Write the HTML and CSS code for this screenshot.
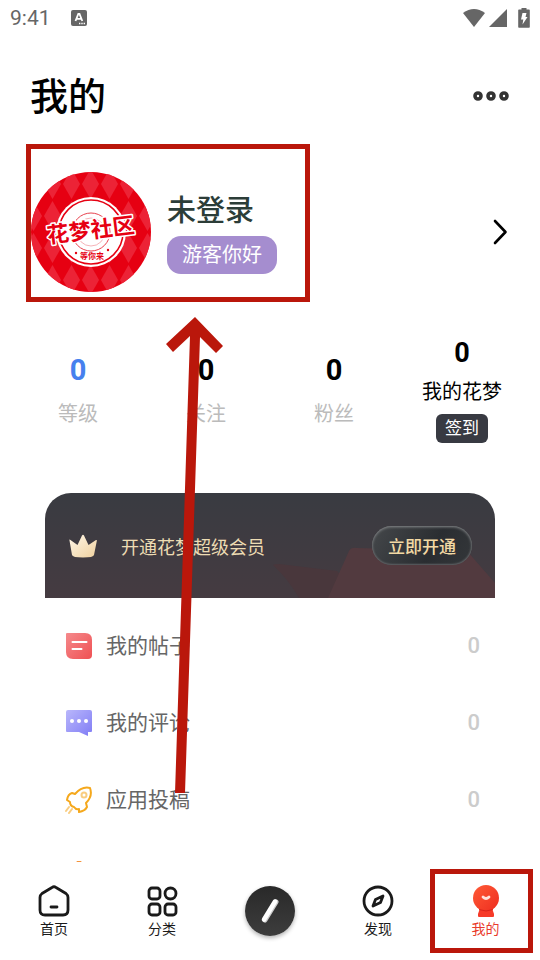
FILE: index.html
```
<!DOCTYPE html>
<html lang="zh-CN">
<head>
    <meta charset="UTF-8">
    <meta name="viewport" content="width=device-width, initial-scale=1.0">
    <title>我的</title>
    <link rel="stylesheet" href="styles.css">
</head>
<body>
    <div class="status-bar">
        <span>9:41</span>
        <svg class="status-app" width="16" height="16" viewBox="0 0 16 16">
            <rect width="16" height="16" rx="2" fill="#666"/>
            <path d="M4.5 11 7.3 4h1.2l2.8 7M5.8 8.8h4.2" fill="none" stroke="#fff" stroke-width="1.8"/>
            <path d="M8 13.5h1.4M10.3 13.5h1.4M12.6 13.5h1.4" stroke="#fff" stroke-width="1.4"/>
        </svg>
        <div class="status-icons">
            <svg width="24" height="20" viewBox="0 0 24 20"><path d="M1 5Q12-3 23 5L12 19Z" fill="#666"/></svg>
            <svg width="20" height="20" viewBox="0 0 20 20"><path d="M19 1v18H1Z" fill="#666"/></svg>
            <svg class="battery" width="12" height="20" viewBox="0 0 12 20">
                <path d="M3.5 0h5v1.5H11a.8.8 0 0 1 .8.8V19a.8.8 0 0 1-.8.8H1a.8.8 0 0 1-.8-.8V2.300a.8.8 0 0 1 .8-.8h2.500Z" fill="#666"/>
                <path d="M4.500 5h4L7.500 9h2L4.500 16.500l.8-5H3Z" fill="#fff"/>
            </svg>
        </div>
    </div>

    <main class="content">
        <header class="header">
            <h1>我的</h1>
            <button class="more" type="button" aria-label="更多">
                <svg width="38" height="12" viewBox="0 0 38 12" fill="none" stroke="#333" stroke-width="3.600">
                    <circle cx="6" cy="6" r="3"/><circle cx="19" cy="6" r="3"/><circle cx="32" cy="6" r="3"/>
                </svg>
            </button>
        </header>

        <section class="profile">
            <div class="profile-box">
                <svg class="avatar" width="120" height="120" viewBox="0 0 120 120">
                    <defs>
                        <pattern id="diamonds" width="19" height="32" patternUnits="userSpaceOnUse" x="12" y="-4">
                            <path d="M9.500 1 18 16 9.500 31 1 16Z" fill="#ec2336"/>
                        </pattern>
                    </defs>
                    <circle cx="60" cy="60" r="60" fill="#e60012"/>
                    <circle cx="60" cy="60" r="60" fill="url(#diamonds)"/>
                    <circle cx="60" cy="60" r="35" fill="#fff"/>
                    <circle cx="60" cy="60" r="32" fill="none" stroke="#e60012" stroke-width="1.500"/>
                    <circle cx="60" cy="60" r="19" fill="none" stroke="#e8434f"/>
                    <circle cx="60" cy="60" r="14" fill="none" stroke="#ee8088" stroke-width=".6"/>
                    <text class="avatar-name" x="60" y="66" text-anchor="middle" transform="rotate(-7 60 60)">花梦社区</text>
                    <text class="avatar-sub" x="61" y="87" text-anchor="middle">等你来</text>
                    <circle cx="45" cy="81" r="1.200" fill="#e60012"/>
                    <circle cx="77" cy="78" r="1.200" fill="#e60012"/>
                </svg>
                <div class="profile-text">
                    <h2>未登录</h2>
                    <span class="greeting">游客你好</span>
                </div>
            </div>
            <a class="profile-link" href="#" aria-label="登录">
                <svg width="16" height="26" viewBox="0 0 16 26" fill="none" stroke="#000" stroke-width="2.600" stroke-linecap="round" stroke-linejoin="round"><path d="M3 2 13.500 13 3 24"/></svg>
            </a>
        </section>

        <section class="stats">
            <div class="stat level"><b>0</b><span>等级</span></div>
            <div class="stat"><b>0</b><span>关注</span></div>
            <div class="stat"><b>0</b><span>粉丝</span></div>
            <div class="stat coins"><b>0</b><span>我的花梦</span><button type="button">签到</button></div>
        </section>

        <section class="vip">
            <svg class="vip-bg" width="224" height="52" viewBox="0 0 224 52">
                <path d="M3 20Q0 18 8 18L66 25 90 52H28Q18 34 3 20Z" fill="#49373c"/>
                <path d="M57 52 78 5Q80 1 86 2L196 5 224 37V52Z" fill="#523a3f"/>
            </svg>
            <svg class="crown" width="30" height="24" viewBox="0 0 30 24">
                <defs><linearGradient id="gold" x2="1" y2="1"><stop stop-color="#fff7e8"/><stop offset="1" stop-color="#efd09e"/></linearGradient></defs>
                <path d="M1.500 6.500Q1 5 2.500 6L9.500 11 14 1.500Q15 0 16 1.500L20.500 11 28 6Q29.200 5.500 28.800 7L26 21Q25.500 23.500 15 23.500T4 21Z" fill="url(#gold)"/>
            </svg>
            <span class="vip-text">开通花梦超级会员</span>
            <button type="button">立即开通</button>
        </section>

        <nav class="menu">
            <a href="#">
                <svg width="28" height="28" viewBox="0 0 28 28">
                    <defs><linearGradient id="red" x2="1" y2="1"><stop stop-color="#f58a8c"/><stop offset="1" stop-color="#ef5053"/></linearGradient></defs>
                    <path d="M2 1h18q7 0 7 7v15q0 4-4 4H8q-7 0-7-7V2q0-1 1-1Z" fill="url(#red)"/>
                    <path d="M7.500 10h14M7.500 17h9" stroke="#fff" stroke-width="2" stroke-linecap="round"/>
                </svg>
                <span>我的帖子</span><b>0</b>
            </a>
            <a href="#">
                <svg width="28" height="28" viewBox="0 0 28 28">
                    <defs><linearGradient id="violet" x2="1" y2="1"><stop stop-color="#b9b7fb"/><stop offset="1" stop-color="#807cf5"/></linearGradient></defs>
                    <path d="M3 1h22q2 0 2 2v19q0 1-1 1h-3v4L14 23H2q-1 0-1-1V3q0-2 2-2Z" fill="url(#violet)"/>
                    <g fill="#fff"><circle cx="7" cy="12" r="2"/><circle cx="14" cy="12" r="2"/><circle cx="21" cy="12" r="2"/></g>
                </svg>
                <span>我的评论</span><b>0</b>
            </a>
            <a href="#">
                <svg width="28" height="28" viewBox="0 0 28 28" fill="none" stroke="#f5a81c" stroke-width="2" stroke-linejoin="round" stroke-linecap="round">
                    <path d="M10 8Q17 0 25 2 28 10 21 17L22 21Q20 25 14 26L14 23Q11 24 9 21 5 20 5 16L2 14Q3 8 7 7Z"/>
                    <circle cx="19" cy="9" r="2.500" stroke="#f9cd80"/>
                    <path d="M4 21 1 25M7 23 4 27" stroke="#f9cd80"/>
                </svg>
                <span>应用投稿</span><b>0</b>
            </a>
            <a href="#" aria-label="更多">
                <svg width="28" height="34" viewBox="0 0 28 34" fill="#f5943c"><path d="M12 1h4L26 16 14 32 2 16Z"/></svg>
            </a>
        </nav>

        <!-- 指向登录区域的箭头 -->
        <svg class="arrow" width="58" height="476" viewBox="166 317 58 476">
            <path d="M195 317 223 346 216 353 200 337 185 793H175L190 336 173 352 166 344Z" fill="#ba170b"/>
        </svg>
    </main>

    <nav class="tabs">
        <a href="#">
            <svg width="34" height="34" viewBox="0 0 34 34" fill="none" stroke="#1a1a1a" stroke-width="2.800" stroke-linecap="round" stroke-linejoin="round">
                <path d="M15 3.500Q17 2 19 3.500L29 9.500Q31 11 31 13.500V26Q31 31 26 31H8Q3 31 3 26V13.500Q3 11 5 9.500ZM14 23h6"/>
            </svg>
            <span>首页</span>
        </a>
        <a href="#">
            <svg width="34" height="34" viewBox="0 0 34 34" fill="none" stroke="#1a1a1a" stroke-width="2.800">
                <rect x="4" y="4" width="11" height="11" rx="3"/><circle cx="25.500" cy="9.500" r="5.500"/>
                <rect x="4" y="20" width="11" height="11" rx="3"/><rect x="20" y="20" width="11" height="11" rx="3"/>
            </svg>
            <span>分类</span>
        </a>
        <button class="compose" type="button" aria-label="发布">
            <svg width="50" height="50" viewBox="0 0 50 50" stroke-linecap="round">
                <path d="M20 34 31 16" stroke="#ccc" stroke-width="5"/>
                <path d="M19 33.500 30 15.500" stroke="#fff" stroke-width="4.500"/>
            </svg>
        </button>
        <a href="#">
            <svg width="34" height="34" viewBox="0 0 34 34" fill="none" stroke="#1a1a1a" stroke-width="2.800" stroke-linejoin="round">
                <circle cx="17" cy="17" r="14"/><path d="M22 12 19.500 18.500 12 22 14.500 15.500Z"/>
            </svg>
            <span>发现</span>
        </a>
        <a class="active" href="#">
            <svg width="34" height="34" viewBox="0 0 34 34">
                <defs><linearGradient id="face" x2="1" y2="1"><stop stop-color="#ff5a36"/><stop offset="1" stop-color="#ee2e20"/></linearGradient></defs>
                <path d="M11 24h12q1 3 2 6v2q0 1-1 1H10q-1 0-1-1v-2q1-3 2-6Z" fill="#f63a28"/>
                <circle cx="17" cy="14" r="13" fill="url(#face)"/>
                <path d="M10 25.500q7 3 14 0" fill="none" stroke="#d9241a"/>
                <path d="M14 13q3 3 6 0" fill="none" stroke="#ffe1dc" stroke-width="2.800" stroke-linecap="round"/>
            </svg>
            <span>我的</span>
        </a>
    </nav>
</body>
</html>
```
FILE: styles.css
```
* {
    margin: 0;
    padding: 0;
    box-sizing: border-box;
}

body {
    font-family: Roboto, "Noto Sans CJK SC", sans-serif;
    background-color: #fff;
    color: #000;
    height: 100vh;
    display: flex;
    flex-direction: column;
    overflow: hidden;
}

a {
    color: inherit;
    text-decoration: none;
}

button {
    font-family: inherit;
    border: none;
    background: none;
    cursor: pointer;
}

svg {
    display: block;
    flex-shrink: 0;
}

.status-bar {
    height: 36px;
    padding: 0 10px;
    display: flex;
    align-items: center;
    gap: 20px;
    font-size: 21px;
    color: #666;
}

.status-icons {
    margin-left: auto;
    display: flex;
    gap: 2px;
}

.battery {
    margin-left: 8px;
}

.content {
    flex: 1;
    min-height: 0;
    position: relative;
    overflow: hidden;
}

.header {
    height: 108px;
    padding: 14px 30px 0;
    display: flex;
    justify-content: space-between;
    align-items: flex-start;
}

h1 {
    font-size: 38px;
    font-weight: 500;
    line-height: 94px;
}

.more {
    height: 92px;
}

.profile {
    padding: 0 32px 0 26px;
    display: flex;
    align-items: center;
    justify-content: space-between;
}

.profile-box {
    width: 284px;
    height: 158px;
    border: 5px solid #ba170b;
    display: flex;
    align-items: center;
    gap: 16px;
    padding-top: 18px;
}

.avatar-name {
    font-size: 22px;
    font-weight: 700;
    fill: #e60012;
    stroke: #fff;
    stroke-width: 3px;
    stroke-linejoin: round;
    paint-order: stroke;
}

.avatar-sub {
    font-size: 8px;
    font-weight: 700;
    fill: #e60012;
}

.profile-text {
    display: flex;
    flex-direction: column;
    align-items: flex-start;
    gap: 4px;
}

h2 {
    font-size: 29px;
    font-weight: 500;
    line-height: 42px;
    color: #2c3d38;
}

.greeting {
    background-color: #a58dcf;
    color: #fff;
    font-size: 20px;
    line-height: 38px;
    padding: 0 15px;
    border-radius: 14px;
}

.profile-link {
    margin-top: 18px;
}

.stats {
    display: grid;
    grid-template-columns: repeat(4, 1fr);
    align-items: center;
    padding: 0 14px;
    margin-top: 34px;
}

.stat {
    display: flex;
    flex-direction: column;
    align-items: center;
    gap: 12px;
    padding-top: 2px;
}

.stat b {
    font-size: 29px;
    line-height: 34px;
    font-weight: 700;
}

.stat span {
    font-size: 20px;
    line-height: 30px;
    color: #bbb;
}

.level b {
    color: #4680ee;
}

.stat.coins {
    gap: 7px;
    padding-top: 0;
}

.coins b {
    font-size: 27px;
}

.stat.coins span {
    color: #000;
}

.coins button {
    background-color: #383a42;
    color: #fff;
    font-size: 17px;
    line-height: 29px;
    padding: 0 9px;
    border-radius: 6px;
}

.vip {
    position: relative;
    height: 105px;
    margin: 50px 45px 0;
    padding: 0 23px;
    display: flex;
    align-items: center;
    border-radius: 26px 26px 0 0;
    background: linear-gradient(#393b41, #453b41);
    overflow: hidden;
}

.vip-bg {
    position: absolute;
    right: 0;
    bottom: 0;
}

.crown {
    margin-right: 23px;
}

.vip-text {
    font-size: 18px;
    color: #eddcb3;
}

.vip button {
    position: relative;
    margin-left: auto;
    width: 100px;
    height: 39px;
    border-radius: 20px;
    background: linear-gradient(120deg, #45484b, #2a2d31 60%, #34373a);
    box-shadow: inset 0 1px 3px #898b8d, inset 0 -1px 2px #55585b;
    color: #f3d9a4;
    font-size: 17px;
    font-weight: 500;
}

.menu {
    padding: 9px 60px 0 65px;
}

.menu a {
    height: 77px;
    display: flex;
    align-items: center;
    gap: 13px;
    font-size: 21px;
    color: #666;
}

.menu span {
    padding-bottom: 3px;
}

.menu b {
    margin-left: auto;
    font-size: 22px;
    font-weight: 500;
    color: #ccc;
}

.arrow {
    position: absolute;
    left: 166px;
    top: 281px;
}

.tabs {
    height: 98px;
    display: grid;
    grid-template-columns: repeat(5, 1fr);
    background-color: #fff;
}

.tabs a {
    display: flex;
    flex-direction: column;
    align-items: center;
    justify-content: center;
    padding-top: 2px;
    font-size: 14px;
    line-height: 22px;
    color: #1a1a1a;
}

.tabs .active {
    margin: 7px 7px 7px -2px;
    padding-left: 8px;
    border: 5px solid #ba170b;
    color: #e93b2c;
}

.compose {
    justify-self: center;
    align-self: center;
    width: 50px;
    height: 50px;
    border-radius: 50%;
    background: linear-gradient(#292929, #3d3d3d);
    box-shadow: 0 2px 4px rgba(0, 0, 0, 0.3);
}
```
